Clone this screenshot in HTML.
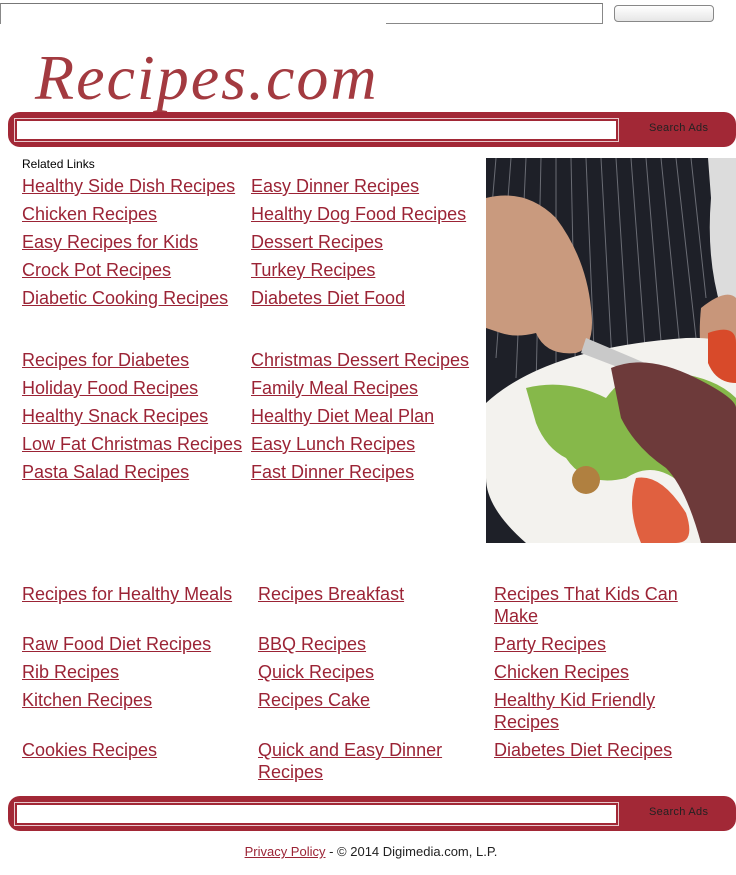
<!DOCTYPE html>
<html><head><meta charset="utf-8"><style>
*{margin:0;padding:0;box-sizing:border-box}
body{width:736px;height:875px;position:relative;background:#fff;font-family:"Liberation Sans",Arial,sans-serif;overflow:hidden}
a{color:#9b2335;text-decoration:underline;font-size:18px;line-height:22px;position:absolute;letter-spacing:0;white-space:nowrap}
a.w{white-space:normal;width:215px}
.bar{position:absolute;left:8px;width:728px;height:35px;background:#a22836;border-radius:12px}
.bar .in{position:absolute;left:7px;top:7px;width:603px;height:22px;background:#fff;border:2px solid #a22836;outline:1px solid #e8c8cc}
.bar span{position:absolute;left:641px;top:10px;font-size:11px;color:#222;letter-spacing:0.3px}
</style></head><body>
<div style="position:absolute;left:0;top:3px;width:603px;height:21px;border:1px solid #888;border-top-color:#777"></div>
<div style="position:absolute;left:1px;top:22px;width:385px;height:3px;background:#fff"></div>
<div style="position:absolute;left:614px;top:5px;width:100px;height:17px;border:1px solid #888;border-radius:4px;background:linear-gradient(#fff,#e6e6e6)"></div>
<div style="position:absolute;left:35px;top:38px;font-family:'Liberation Serif',serif;font-style:italic;font-size:64px;color:#a33a40;letter-spacing:2px;line-height:80px">Recipes.com</div>
<div class="bar" style="top:112px"><div class="in"></div><span>Search Ads</span></div>
<div style="position:absolute;left:22px;top:157px;font-size:12px;color:#000">Related Links</div>
<a style="left:22px;top:175px">Healthy Side Dish Recipes</a>
<a style="left:22px;top:203px">Chicken Recipes</a>
<a style="left:22px;top:231px">Easy Recipes for Kids</a>
<a style="left:22px;top:259px">Crock Pot Recipes</a>
<a style="left:22px;top:287px">Diabetic Cooking Recipes</a>
<a style="left:251px;top:175px">Easy Dinner Recipes</a>
<a style="left:251px;top:203px">Healthy Dog Food Recipes</a>
<a style="left:251px;top:231px">Dessert Recipes</a>
<a style="left:251px;top:259px">Turkey Recipes</a>
<a style="left:251px;top:287px">Diabetes Diet Food</a>
<a style="left:22px;top:349px">Recipes for Diabetes</a>
<a style="left:22px;top:377px">Holiday Food Recipes</a>
<a style="left:22px;top:405px">Healthy Snack Recipes</a>
<a style="left:22px;top:433px">Low Fat Christmas Recipes</a>
<a style="left:22px;top:461px">Pasta Salad Recipes</a>
<a style="left:251px;top:349px">Christmas Dessert Recipes</a>
<a style="left:251px;top:377px">Family Meal Recipes</a>
<a style="left:251px;top:405px">Healthy Diet Meal Plan</a>
<a style="left:251px;top:433px">Easy Lunch Recipes</a>
<a style="left:251px;top:461px">Fast Dinner Recipes</a>
<svg style="position:absolute;left:486px;top:158px" width="250" height="385" viewBox="0 0 250 385">
<rect width="250" height="385" fill="#1e2028"/>
<g stroke="#6a6c74" stroke-width="1">
<path d="M10 0 L0 120 M25 0 L10 200 M40 0 L30 220 M55 0 L50 230 M70 0 L70 240 M85 0 L90 240 M100 0 L110 240 M115 0 L128 240 M130 0 L145 240 M145 0 L162 230 M160 0 L178 220 M175 0 L195 200 M190 0 L210 180 M205 0 L220 140"/>
</g>
<path d="M222 0 H250 V140 L235 150 Q220 100 225 40 Z" fill="#dcdcdc"/>
<path d="M0 40 Q40 30 70 60 Q100 100 105 150 Q110 190 90 195 Q60 198 50 175 Q30 180 15 175 L0 170 Z" fill="#c99a7e"/>
<path d="M215 150 Q240 130 250 140 V240 Q235 240 225 225 Q210 200 215 150 Z" fill="#c8967a"/>
<path d="M0 245 Q60 190 200 180 Q250 178 250 200 V385 H40 Q0 350 0 320 Z" fill="#f3f2ee"/>
<path d="M100 180 L230 235 L225 245 L95 195 Z" fill="#c9c9c9"/>
<path d="M40 230 Q80 220 120 240 Q150 200 190 215 Q230 220 250 240 V340 Q220 360 200 330 Q170 300 140 320 Q100 330 80 300 Q60 290 50 265 Z" fill="#86b84a"/>
<path d="M125 210 Q160 195 210 220 Q250 240 250 250 V385 H215 Q200 330 180 310 Q150 290 135 260 Z" fill="#6d3a3a"/>
<path d="M222 175 Q250 165 250 185 V225 Q230 225 222 205 Z" fill="#d84a2a"/>
<path d="M150 320 Q175 315 200 355 Q210 385 190 385 H155 Q140 350 150 320 Z" fill="#e06040"/>
<circle cx="100" cy="322" r="14" fill="#b08040"/>
</svg>
<a style="left:22px;top:583px">Recipes for Healthy Meals</a>
<a style="left:22px;top:633px">Raw Food Diet Recipes</a>
<a style="left:22px;top:661px">Rib Recipes</a>
<a style="left:22px;top:689px">Kitchen Recipes</a>
<a style="left:22px;top:739px">Cookies Recipes</a>
<a style="left:258px;top:583px">Recipes Breakfast</a>
<a style="left:258px;top:633px">BBQ Recipes</a>
<a style="left:258px;top:661px">Quick Recipes</a>
<a style="left:258px;top:689px">Recipes Cake</a>
<a class="w" style="left:258px;top:739px">Quick and Easy Dinner Recipes</a>
<a class="w" style="left:494px;top:583px;width:200px">Recipes That Kids Can Make</a>
<a style="left:494px;top:633px">Party Recipes</a>
<a style="left:494px;top:661px">Chicken Recipes</a>
<a class="w" style="left:494px;top:689px;width:180px">Healthy Kid Friendly Recipes</a>
<a style="left:494px;top:739px">Diabetes Diet Recipes</a>
<div class="bar" style="top:796px"><div class="in"></div><span>Search Ads</span></div>
<div style="position:absolute;left:0;width:736px;top:841px;text-align:center;font-size:13px;color:#222;padding-left:6px"><a style="position:static;font-size:13px;letter-spacing:0">Privacy Policy</a> - © 2014 Digimedia.com, L.P.</div>
</body></html>
